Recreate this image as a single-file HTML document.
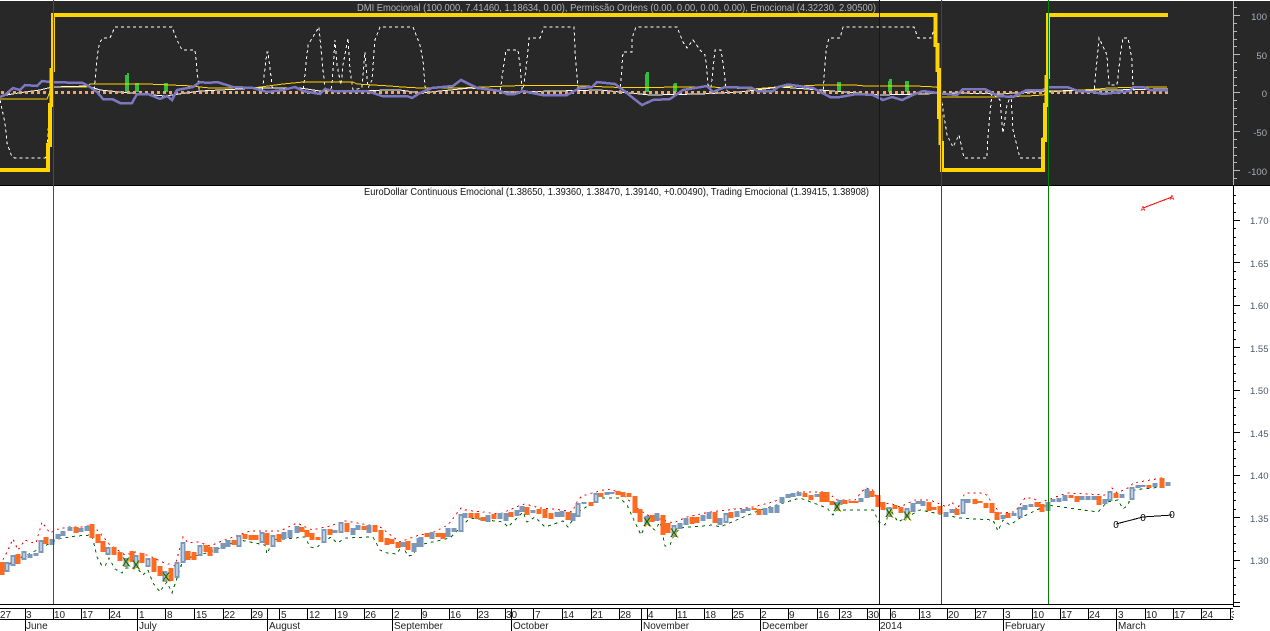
<!DOCTYPE html>
<html><head><meta charset="utf-8"><style>
html,body{margin:0;padding:0;background:#fff;width:1270px;height:631px;overflow:hidden}
svg{display:block;font-family:"Liberation Sans",Arial,sans-serif}
path,rect{shape-rendering:crispEdges}
</style></head><body>
<svg width="1270" height="631" viewBox="0 0 1270 631" xmlns="http://www.w3.org/2000/svg">
<rect width="1270" height="631" fill="#fff"/>
<rect x="0" y="1" width="1270" height="184" fill="#282828"/>
<rect x="0" y="185" width="1270" height="1" fill="#000"/>

<!-- top panel -->
<path fill="none" stroke="#fff" stroke-dasharray="3 3" d="M0 100L5 123 7 143 12 157 15 158H45L47 155 48 130 50 118 51 93H94L95 80 98 50 100 42 103 38H110L115 27H172L177 40 182 50H195L197 70 199 88 200 93H262L263 85 267 52H268L272 85 273 93H303L308 45 319 27 322 60 325 88 330 93 332 85 335 40 337 65 341 85 343 65 348 38 350 70 353 90 362 88 365 52 368 88 372 80 375 40 380 27H413L420 45 423 60 425 85 426 93H500L503 70 506 50H518L520 65 522 90 524 85 527 60 529 38H540L544 27H574L575 50 578 88 579 93H620L623 52H632V38L636 27H677L683 42 687 48 693 40 700 50 705 55 707 70 708 85 711 88 715 50H721L724 70 726 88 728 93H823L826 50 829 38H840L843 27H914L918 38H931L934 30 937 50 938 70 940 85 943 110 947 135 953 147 959 135 964 158H987L988 135 992 93 1000 100 1003 133 1007 105 1011 95 1013 130 1020 158H1042L1044 125 1047 100 1048 93H1094L1097 60 1099 38 1107 55 1109 85H1117L1121 50 1123 38H1128L1132 60 1133 88 1135 93H1168"/>
<path fill="none" stroke="#282828" stroke-width="3" d="M1 92.5H1168"/>
<path fill="#2fbf3a" d="M125 75h2v-2h2v19h-4zM135 83h4v9h-4zM164 83h4v9h-4zM645 74h1v-2h3v20h-4zM673 84h1v-1h3v9h-4zM837 82h4v10h-4zM888 81h1v-2h3v13h-4zM905 81h4v11h-4z"/>
<path fill="none" stroke="#ffd400" d="M0 99H47L52 87H87L90 84H147L193 86 200 87 210 88H253L283 84 303 82H353L357 84 390 86 402 87 420 88H460L508 86 522 85.5H572L620 87.5 710 87 753 89 777 87 820 85H855L865 86H915L937 87 940 97H992L1028 96 1043 95 1048 92 1098 89 1108 88 1148 87H1167"/>
<path fill="none" stroke="#fff" stroke-width="1" d="M0 96L25 92 40 90 52 87 88 86 100 90 130 93 165 96 200 91 260 88 300 88 320 91 400 90 420 93 470 88 510 92 600 90 650 95 700 94 740 92 780 87 820 90 880 95 920 94 960 93 1000 94 1048 91 1168 89"/>
<path fill="none" stroke="#f4a460" stroke-width="3" stroke-dasharray="3 3" d="M1 92.5H1168"/>
<path fill="none" stroke="#7b78c0" stroke-width="2.5" d="M0 97L5 95 13 88 20 90 25 85 37 86 42 81 50 82 83 83 90 87 97 92 103 99H112L120 103H132L137 94H148L160 99 167 96 172 100 177 90 193 87 200 82 208 83 217 82 233 87 253 88 267 92 283 90 295 87 303 91 320 94 325 89 333 91H367L382 96H407L412 98 420 93 432 88 453 86 461 80 477 88 500 91 507 94H515L523 91 542 95H567L580 88 592 87 597 82 615 84 623 90 633 98 642 105 653 100 670 99 683 90 707 86 713 92 725 87 752 88 757 91H773L778 87 788 84.5 813 88 830 97H840L857 94 873 95 883 100 892 97 902 100 915 94 923 91 937 93 957 95 963 89H985L998 96 1013 97 1027 90H1043L1048 87H1067L1078 91 1093 92 1103 94 1130 91 1133 87H1143L1150 90H1168"/>
<path fill="none" stroke="#ffd400" stroke-width="4" stroke-linejoin="miter" d="M0 170H48V145H50V105H51.5V70H53V15H935.5V45H937.5V70H939V117H940.5V143H942V170H1043V140H1045V105H1046.5V77H1048V15H1168"/>

<path stroke="#b8b8b8" fill="none" d="M1233.5 1V185M1233 15.5H1240M1233 54.5H1240M1233 92.5H1240M1233 131.5H1240M1233 170.5H1240M1233 7.5h4M1233 23.5h4M1233 31.5h4M1233 39.5h4M1233 46.5h4M1233 62.5h4M1233 70.5h4M1233 77.5h4M1233 85.5h4M1233 100.5h4M1233 108.5h4M1233 116.5h4M1233 124.5h4M1233 139.5h4M1233 147.5h4M1233 155.5h4M1233 162.5h4M1233 178.5h4"/>
<g fill="#a8b0b8" font-size="9.5" text-anchor="end">
<text x="1267" y="20">100</text><text x="1267" y="59">50</text><text x="1267" y="97">0</text><text x="1267" y="136">-50</text><text x="1267" y="175">-100</text>
</g>
<text x="357" y="11" font-size="10.5" fill="#b4b4b4" textLength="519" lengthAdjust="spacingAndGlyphs">DMI Emocional (100.000, 7.41460, 1.18634, 0.00), Permissão Ordens (0.00, 0.00, 0.00, 0.00), Emocional (4.32230, 2.90500)</text>

<!-- lower panel -->
<text x="364" y="195" font-size="10.5" fill="#111" textLength="505" lengthAdjust="spacingAndGlyphs">EuroDollar Continuous Emocional (1.38650, 1.39360, 1.38470, 1.39140, +0.00490), Trading Emocional (1.39415, 1.38908)</text>

<path fill="none" stroke="#f00" stroke-dasharray="2 4" d="M0 565L7 552 13 539 18 550 25 540 30 542 36 543 42 522 50 533 58 529 70 527 82 527 92 525 100 533 110 545 125 555 136 552 150 556 162 562 175 566 183 537 188 543 198 542 210 546 222 541 236 536 250 531 262 531 280 531 297 523 312 530 330 526 345 521 380 527 400 542 419 535 432 533 448 525 461 508 465 510 500 514 521 505 525 504 540 508 562 510 572 512 578 500 582 496 596 492 607 489 620 492 637 508 647 515 673 523 687 517 710 512 753 507 773 502 797 492 827 492 837 500 855 500 865 488 872 489 880 505 890 503 900 507 915 500 930 500 947 507 952 502 957 510 965 493 980 493 987 495 992 503 1000 513 1015 512 1025 498 1033 498 1040 503 1047 500 1067 493 1107 495 1112 488 1117 493 1130 487 1133 483 1162 478"/>
<path fill="none" stroke="#060" stroke-dasharray="3 4" d="M0 575L13 560 25 556 41 548 58 539 76 536 92 535 97 557 102 566 105 566 109 558 115 569 122 573 126 568 137 568 143 575 148 570 153 583 160 592 163 587 167 582 172 593 177 578 182 563 188 558 210 552 240 540 265 545 267 554 273 540 305 537 310 547 316 548 322 543 331 537 337 543 346 538 373 537 380 550 387 553 397 554 402 545 408 556 413 555 419 545 450 538 470 518 503 522 508 527 513 522 523 512 527 522 535 517 545 527 563 521 568 527 577 513 600 498 620 498 627 505 633 518 641 535 647 522 650 527 655 530 660 522 665 546 670 545 674 535 680 528 713 525 720 527 760 510 800 498 827 508 833 515 837 510 873 510 879 522 885 525 890 509 898 522 920 510 960 518 993 520 998 531 1003 520 1010 525 1020 518 1047 505 1098 512 1107 502 1118 500 1123 509 1128 505 1133 490 1162 487"/>

<path fill="none" stroke="#ff6a21" stroke-width="5" d="M2 562V575M18 554V564M46 537V544M76 527V533M92 524V538M98 534V543M103 541V552M114 547V555M120 552V561M132 551V562M142 553V563M154 558V572M160 566V576M171 568V581M188 551V560M194 552V560M206 545V552M210 547V556M234 540V545M245 534V539M251 535V540M256 535V540M267 533V545M279 534V542M302 527V532M307 530V537M312 533V540M318 537V540M330 529V535M347 523V532M364 526V530M375 525V532M381 530V542M387 538V545M392 539V544M398 542V548M408 541V550M427 533V537M438 533V537M443 533V539M471 513V518M477 513V519M483 517V521M494 514V519M511 512V517M527 507V515M539 509V514M545 509V518M551 513V519M568 512V520M591 502V506M601 493V497M618 491V495M623 492V497M629 493V497M635 496V513M640 509V522M652 515V522M663 515V535M668 523V533M692 517V524M697 517V523M715 512V523M731 512V518M754 508V510M759 509V515M805 493V497M811 495V500M822 492V502M827 492V502M832 501V505M845 500V504M851 501V503M856 501V503M872 491V497M878 495V507M883 502V510M895 505V509M901 507V513M929 502V511M934 507V510M940 506V514M957 509V515M975 499V504M980 501V503M986 503V508M992 503V513M997 512V520M1008 513V518M1037 502V507M1042 504V512M1071 495V498M1077 496V502M1099 496V505M1116 493V498M1149 485V488M1162 478V488"/>
<path fill="none" stroke="#7b98bb" stroke-width="5" d="M7 562V572M13 555V566M24 551V560M30 554V558M36 553V556M41 540V553M52 539V545M58 534V539M63 531V536M70 527V531M81 528V532M87 526V531M108 547V555M126 558V567M136 555V568M148 558V567M165 571V582M177 562V578M183 542V563M200 545V556M216 547V553M223 543V549M228 540V547M239 535V547M262 532V543M273 535V547M284 532V539M290 530V538M297 526V533M324 529V543M335 530V533M341 522V533M353 528V535M358 525V530M369 525V533M403 542V547M414 543V552M419 538V547M421 537V547M432 532V539M448 528V537M454 528V532M461 514V532M465 513V518M488 515V522M500 513V519M506 513V521M517 510V516M522 506V512M533 510V513M557 512V517M562 511V517M573 513V521M578 503V517M584 502V504M596 493V503M607 492V495M612 492V494M647 516V525M657 513V521M674 525V537M680 523V529M686 518V525M703 515V521M709 512V519M720 518V525M726 513V523M737 511V517M743 509V513M748 508V511M765 508V515M771 507V513M777 505V513M782 497V503M788 494V498M793 493V497M799 492V496M817 494V497M837 502V510M840 500V505M861 498V502M867 489V498M889 507V517M907 508V518M913 503V512M918 501V504M923 501V506M946 512V517M952 509V513M963 499V514M968 499V503M1003 515V519M1014 513V516M1020 507V518M1025 505V510M1031 504V507M1048 502V511M1053 499V502M1059 498V502M1065 495V501M1082 496V500M1088 496V500M1094 496V500M1105 499V504M1110 491V501M1122 494V498M1132 487V500M1138 485V488M1143 485V487M1155 483V487M1168 482V486"/>
<path fill="none" stroke="#fff" stroke-width="1" d="M7 564V570M13 557V564M24 553V558M41 542V551M108 549V553M126 560V565M136 557V566M148 560V565M165 573V580M177 564V576M183 544V561M200 547V554M239 537V545M262 534V541M273 537V545M324 531V541M341 524V531M461 516V530M578 505V515M596 495V501M726 515V521M674 527V535M889 509V515M907 510V516M963 501V512M1020 509V516M1110 493V499M1132 489V498"/>

<g font-size="12" text-anchor="middle">
<g fill="#e0b000"><text x="127" y="567">X</text><text x="137" y="570">X</text><text x="167" y="582">X</text><text x="648" y="527">X</text><text x="675" y="538">X</text><text x="838" y="512">X</text><text x="890" y="518">X</text><text x="908" y="521">X</text></g>
<g fill="#006000"><text x="126" y="566">X</text><text x="136" y="569">X</text><text x="166" y="581">X</text><text x="647" y="526">X</text><text x="674" y="537">X</text><text x="837" y="511">X</text><text x="889" y="517">X</text><text x="907" y="520">X</text></g>
</g>

<path fill="none" stroke="#000" d="M1116 524L1143 517 1172 515"/>
<g font-size="10" fill="#000" text-anchor="middle"><text x="1116" y="528">0</text><text x="1143" y="521">0</text><text x="1172" y="518">0</text></g>
<path fill="none" stroke="#f00" d="M1143 208L1172 197"/>
<g font-size="7" fill="#f00" text-anchor="middle"><text x="1143" y="211">A</text><text x="1172" y="200">A</text></g>

<!-- vertical cursors -->
<path fill="none" stroke="#008000" d="M53.5 0V604M1048.5 0V604"/>
<path fill="none" stroke="#0000c8" d="M879.5 0V604"/>
<path fill="none" stroke="#e00000" d="M941.5 0V604"/>

<!-- price axis -->
<path fill="none" stroke="#000" d="M1233.5 186V607M1233 220.5h7M1233 262.5h7M1233 305.5h7M1233 347.5h7M1233 390.5h7M1233 432.5h7M1233 475.5h7M1233 517.5h7M1233 560.5h7M1233 602.5h7M1233 606.5h7M1233 195.5h3M1233 203.5h3M1233 212.5h3M1233 228.5h3M1233 237.5h3M1233 245.5h3M1233 254.5h3M1233 271.5h3M1233 279.5h3M1233 288.5h3M1233 296.5h3M1233 313.5h3M1233 322.5h3M1233 330.5h3M1233 339.5h3M1233 356.5h3M1233 364.5h3M1233 373.5h3M1233 381.5h3M1233 398.5h3M1233 407.5h3M1233 415.5h3M1233 424.5h3M1233 441.5h3M1233 449.5h3M1233 458.5h3M1233 466.5h3M1233 483.5h3M1233 492.5h3M1233 500.5h3M1233 509.5h3M1233 526.5h3M1233 534.5h3M1233 543.5h3M1233 551.5h3M1233 568.5h3M1233 577.5h3M1233 585.5h3M1233 594.5h3"/>
<g font-size="9.5" fill="#48596b">
<text x="1250" y="224">1.70</text><text x="1250" y="267">1.65</text><text x="1250" y="309">1.60</text><text x="1250" y="352">1.55</text><text x="1250" y="394">1.50</text><text x="1250" y="437">1.45</text><text x="1250" y="479">1.40</text><text x="1250" y="522">1.35</text><text x="1250" y="564">1.30</text>
</g>

<!-- date axis -->
<path fill="none" stroke="#000" d="M0 604.5H1233M0 608.5H1233M0 619.5H1233M25.5 608V631M53.5 608V619M81.5 608V619M109.5 608V619M137.5 608V631M165.5 608V619M194.5 608V619M223.5 608V619M251.5 608V619M267.5 608V631M279.5 608V619M307.5 608V619M335.5 608V619M364.5 608V619M392.5 608V631M421.5 608V619M449.5 608V619M477.5 608V619M505.5 608V619M511.5 608V631M533.5 608V619M562.5 608V619M591.5 608V619M619.5 608V619M641.5 608V631M647.5 608V619M676.5 608V619M704.5 608V619M732.5 608V619M760.5 608V631M788.5 608V619M817.5 608V619M839.5 608V619M867.5 608V619M879.5 608V631M890.5 608V619M919.5 608V619M947.5 608V619M975.5 608V619M1003.5 608V631M1032.5 608V619M1060.5 608V619M1088.5 608V619M1116.5 608V631M1145.5 608V619M1173.5 608V619M1201.5 608V619M1230.5 608V619"/>
<g font-size="10" fill="#222">
<text x="0" y="618">27</text><text x="26" y="618">3</text><text x="54" y="618">10</text><text x="82" y="618">17</text><text x="110" y="618">24</text><text x="139" y="618">1</text><text x="167" y="618">8</text><text x="196" y="618">15</text><text x="224" y="618">22</text><text x="252" y="618">29</text><text x="281" y="618">5</text><text x="309" y="618">12</text><text x="337" y="618">19</text><text x="365" y="618">26</text><text x="394" y="618">2</text><text x="422" y="618">9</text><text x="450" y="618">16</text><text x="478" y="618">23</text><text x="506" y="618">30</text><text x="535" y="618">7</text><text x="563" y="618">14</text><text x="592" y="618">21</text><text x="620" y="618">28</text><text x="648" y="618">4</text><text x="677" y="618">11</text><text x="705" y="618">18</text><text x="733" y="618">25</text><text x="761" y="618">2</text><text x="789" y="618">9</text><text x="818" y="618">16</text><text x="841" y="618">23</text><text x="868" y="618">30</text><text x="891" y="618">6</text><text x="920" y="618">13</text><text x="948" y="618">20</text><text x="976" y="618">27</text><text x="1005" y="618">3</text><text x="1033" y="618">10</text><text x="1061" y="618">17</text><text x="1089" y="618">24</text><text x="1118" y="618">3</text><text x="1146" y="618">10</text><text x="1174" y="618">17</text><text x="1202" y="618">24</text><text x="1231" y="618">3</text>
<text x="26" y="629">June</text><text x="139" y="629">July</text><text x="269" y="629">August</text><text x="394" y="629">September</text><text x="513" y="629">October</text><text x="643" y="629">November</text><text x="762" y="629">December</text><text x="880" y="629">2014</text><text x="1005" y="629">February</text><text x="1118" y="629">March</text>
</g>
<rect x="1234" y="608" width="36" height="23" fill="#fff"/>
</svg>
</body></html>
